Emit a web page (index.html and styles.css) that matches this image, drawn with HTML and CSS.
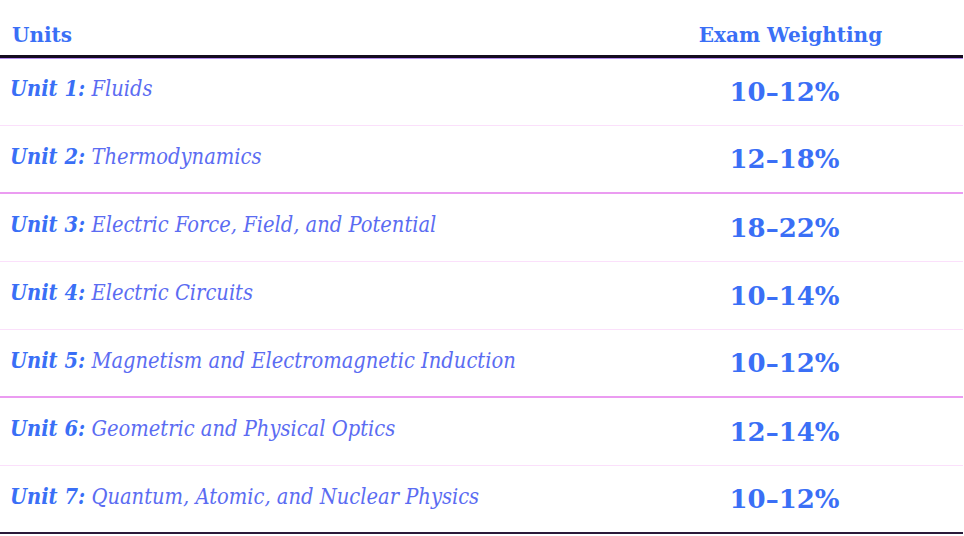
FILE: index.html
```html
<!DOCTYPE html>
<html>
<head>
<meta charset="utf-8">
<link rel="stylesheet" href="styles.css">
</head>
<body>
<div class="tbl">
  <div class="head">
    <div class="c1">Units</div>
    <div class="c2">Exam Weighting</div>
  </div>
  <div class="row faint">
    <div class="c1"><b>Unit 1:</b> <i>Fluids</i></div>
    <div class="c2">10–12%</div>
  </div>
  <div class="row strong">
    <div class="c1"><b>Unit 2:</b> <i>Thermodynamics</i></div>
    <div class="c2">12–18%</div>
  </div>
  <div class="row faint">
    <div class="c1"><b>Unit 3:</b> <i>Electric Force, Field, and Potential</i></div>
    <div class="c2">18–22%</div>
  </div>
  <div class="row faint">
    <div class="c1"><b>Unit 4:</b> <i>Electric Circuits</i></div>
    <div class="c2">10–14%</div>
  </div>
  <div class="row strong">
    <div class="c1"><b>Unit 5:</b> <i>Magnetism and Electromagnetic Induction</i></div>
    <div class="c2">10–12%</div>
  </div>
  <div class="row faint">
    <div class="c1"><b>Unit 6:</b> <i>Geometric and Physical Optics</i></div>
    <div class="c2">12–14%</div>
  </div>
  <div class="row last">
    <div class="c1"><b>Unit 7:</b> <i>Quantum, Atomic, and Nuclear Physics</i></div>
    <div class="c2">10–12%</div>
  </div>
</div>
</body>
</html>
```

FILE: styles.css
```css
html, body {
  margin: 0;
  padding: 0;
  background: #ffffff;
}
.tbl {
  width: 963px;
  font-family: "DejaVu Serif", serif;
  color: #3a6ff6;
}
.head {
  display: grid;
  grid-template-columns: 606px 1fr;
  height: 55px;
  align-items: end;
  border-bottom: 3px solid #140c1e;
  box-shadow: 0 1px 0 #b58cf0, 0 -1px 0 #c9a4f4;
}
.head .c1 {
  padding-left: 12px;
  padding-bottom: 8px;
  font-weight: bold;
  font-size: 20px;
}
.head .c2 {
  padding-left: 12px;
  padding-bottom: 8px;
  text-align: center;
  font-weight: bold;
  font-size: 20px;
}
.row {
  display: grid;
  grid-template-columns: 606px 1fr;
  height: 67px;
  align-items: center;
  border-bottom: 1px solid #fbe0fb;
}
.row.strong {
  border-bottom: 2px solid #eb9cf1;
  height: 66px;
}
.row.last {
  border-bottom: 2px solid #2a1a3a;
  height: 66px;
}
.row .c1 {
  padding-left: 10px;
  padding-bottom: 6px;
  font-size: 21.7px;
  font-stretch: semi-condensed;
}
.row .c1 b {
  font-weight: bold;
  font-style: italic;
  color: #3a6ff6;
}
.row .c1 i {
  font-style: italic;
  color: #5b6cf2;
}
.row .c2 {
  text-align: center;
  font-weight: bold;
  font-size: 26px;
}
```
